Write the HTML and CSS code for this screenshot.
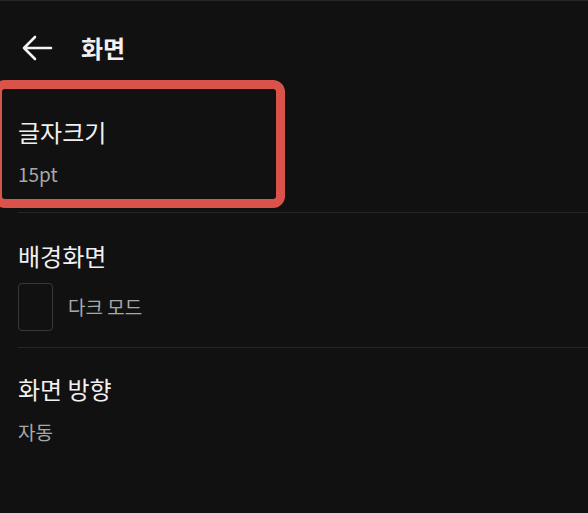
FILE: index.html
```html
<!DOCTYPE html>
<html>
<head>
<meta charset="utf-8">
<link rel="stylesheet" href="styles.css">
</head>
<body>
<div class="screen">
 <div class="header">
  <svg class="back" width="32" height="26" viewBox="0 0 32 26">
   <path d="M30 13H3M14 2L3 13L14 24" fill="none" stroke="#f2f2f2" stroke-width="2.6" stroke-linecap="round" stroke-linejoin="round"/>
  </svg>
  <span class="title">화면</span>
 </div>

 <div class="item highlight">
  <div class="item-title">글자크기</div>
  <div class="item-sub">15pt</div>
 </div>

 <div class="item bordered">
  <div class="item-title">배경화면</div>
  <div class="mode">
   <div class="swatch"></div>
   <span class="item-sub">다크 모드</span>
  </div>
 </div>

 <div class="item bordered">
  <div class="item-title">화면 방향</div>
  <div class="item-sub">자동</div>
 </div>
</div>
</body>
</html>
```

FILE: styles.css
```css
html, body{
   margin:0;
   padding:0;
   background:#111111;
}

.screen{
   width:588px;
   height:513px;
   border-top:1px solid #262626;
   box-sizing:border-box;
   overflow:hidden;
   font-family:"Noto Sans CJK KR", "Noto Sans", sans-serif;
   color:#f0f0f0;
}

.header{
   height:79px;
   box-sizing:border-box;
   display:flex;
   align-items:center;
   padding:14px 0 0 21px;
   gap:28px;
}

.back{
   display:block;
}

.title{
   font-size:24px;
   font-weight:bold;
   line-height:30px;
}

.item{
   margin-left:18px;
}

.item-title{
   font-size:24px;
   line-height:30px;
}

.item-sub{
   font-size:19px;
   line-height:24px;
   color:#a8a8a8;
}

/* red marker round the first row */
.highlight{
   margin-left:-7px;
   width:292px;
   height:128px;
   border:9px solid #d9534b;
   border-radius:12px;
   padding:28px 0 0 16px;
   box-sizing:border-box;
}

.highlight .item-title{
   margin-bottom:15px;
}

.bordered{
   border-top:1px solid #262626;
}

.highlight + .bordered{
   margin-top:4px;
   padding:28px 0 16px;
}

.bordered + .bordered{
   padding-top:26px;
}

.mode{
   display:flex;
   align-items:center;
   gap:15px;
   margin-top:12px;
}

.swatch{
   width:33px;
   height:46px;
   border:1px solid #383838;
   border-radius:4px;
}

.bordered + .bordered .item-title{
   margin-bottom:16px;
}
```
